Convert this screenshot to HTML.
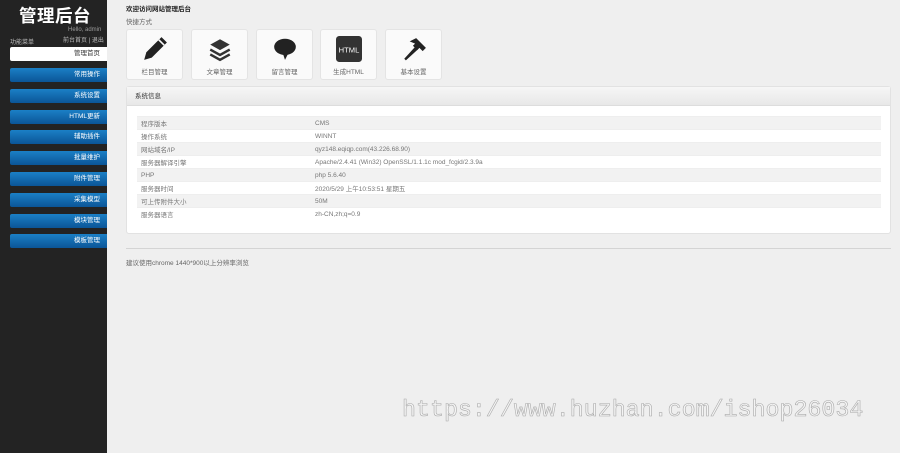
<!DOCTYPE html>
<html><head><meta charset="utf-8"><style>
*{margin:0;padding:0;box-sizing:border-box}
body{width:900px;height:453px;overflow:hidden;background:#efefef;font-family:"Liberation Sans","Noto Sans CJK SC",sans-serif;font-size:7px;color:#555;position:relative}
#side{position:absolute;left:0;top:0;width:107px;height:453px;background:#232323}
#side h1{position:absolute;left:19px;top:3px;font-size:17.5px;color:#fff;font-weight:bold;letter-spacing:0.5px;font-family:"Liberation Sans","Noto Sans CJK SC",sans-serif}
.t{position:absolute;font-size:6px;color:#bbb;white-space:nowrap}
.btn{position:absolute;left:10px;width:97px;height:14px;background:linear-gradient(#1b7fc6,#0b5597);color:#fff;text-align:right;padding-right:7px;line-height:14px;font-size:6.5px;border-radius:2px 0 0 2px}
.sc{position:absolute;top:29px;width:57px;height:51px;background:#fafafa;border:1px solid #e4e4e4;border-radius:3px;text-align:center}
.sc span{position:absolute;left:0;right:0;top:36px;font-size:6.5px;color:#666}
.sc svg{position:absolute;left:15px;top:6px}
#panel{position:absolute;left:126px;top:86px;width:765px;height:148px;background:#fff;border:1px solid #e2e2e2;border-radius:3px}
#ph{height:19px;background:linear-gradient(#f6f6f6,#e8e8e8);border-bottom:1px solid #ddd;padding-left:8px;line-height:19px;font-size:6.5px;color:#333}
table{position:absolute;left:10px;top:29px;width:744px;border-collapse:collapse}
td{height:13px;font-size:6.5px;color:#777;border-top:1px solid #eee;padding-left:4px}
tr:nth-child(odd) td{background:#f2f2f2}
td:first-child{width:174px}
</style></head><body>
<div id="side">
<h1>管理后台</h1>
<div class="t" style="left:68px;top:27px;color:#999">Hello, admin</div>
<div class="t" style="left:63px;top:35px">前台首页 | 退出</div>
<div class="t" style="left:10px;top:37px">功能菜单</div>
<div style="position:absolute;left:10px;top:47px;width:97px;height:14px;background:#fff;border-radius:2px 0 0 2px;text-align:right;padding-right:7px;line-height:14px;font-size:6.5px;color:#333">管理首页</div>
<div class="btn" style="top:68px">常用操作</div>
<div class="btn" style="top:89px">系统设置</div>
<div class="btn" style="top:110px">HTML更新</div>
<div class="btn" style="top:130px">辅助插件</div>
<div class="btn" style="top:151px">批量维护</div>
<div class="btn" style="top:172px">附件管理</div>
<div class="btn" style="top:193px">采集模型</div>
<div class="btn" style="top:214px">模块管理</div>
<div class="btn" style="top:234px">模板管理</div>
</div>
<div style="position:absolute;left:126px;top:3px;font-size:6.5px;color:#222;font-weight:bold">欢迎访问网站管理后台</div>
<div style="position:absolute;left:126px;top:16px;font-size:6.5px;color:#666">快捷方式</div>
<div class="sc" style="left:126px"><svg width="26" height="26" viewBox="0 0 24 24"><path d="M18 1l5 5-14 14-7 2 2-7z" fill="#222"/><path d="M15.5 3.5l5 5" stroke="#fafafa" stroke-width="1.5"/></svg><span>栏目管理</span></div>
<div class="sc" style="left:191px"><svg width="26" height="26" viewBox="0 0 24 24"><path d="M3 8l9-5 9 5-9 5z" fill="#333"/><path d="M3 12.5l9 5 9-5M3 17l9 5 9-5" stroke="#333" stroke-width="2.2" fill="none"/></svg><span>文章管理</span></div>
<div class="sc" style="left:256px"><svg width="26" height="26" viewBox="0 0 24 24"><ellipse cx="12" cy="10" rx="10" ry="7.5" fill="#222"/><path d="M10 16l2 6 3-6z" fill="#222"/></svg><span>留言管理</span></div>
<div class="sc" style="left:320px"><svg width="26" height="26" viewBox="0 0 24 24"><rect x="0" y="0" width="24" height="24" rx="3" fill="#333"/><text x="12" y="15" font-size="7" fill="#fff" text-anchor="middle" font-family="Liberation Sans">HTML</text></svg><span>生成HTML</span></div>
<div class="sc" style="left:385px"><svg width="26" height="26" viewBox="0 0 24 24"><path d="M3 21l10-11 2.5 2.5-11 10z" fill="#222"/><path d="M8 5l6-3 9 9-3 3-3-3-2 2-4-4 2-2z" fill="#222"/></svg><span>基本设置</span></div>
<div id="panel"><div id="ph">系统信息</div>
<table>
<tr><td>程序版本</td><td>CMS</td></tr>
<tr><td>操作系统</td><td>WINNT</td></tr>
<tr><td>网站域名/IP</td><td>qyz148.eqiqp.com(43.226.68.90)</td></tr>
<tr><td>服务器解译引擎</td><td>Apache/2.4.41 (Win32) OpenSSL/1.1.1c mod_fcgid/2.3.9a</td></tr>
<tr><td>PHP</td><td>php 5.6.40</td></tr>
<tr><td>服务器时间</td><td>2020/5/29 上午10:53:51 星期五</td></tr>
<tr><td>可上传附件大小</td><td>50M</td></tr>
<tr><td>服务器语言</td><td>zh-CN,zh;q=0.9</td></tr>
</table></div>
<div style="position:absolute;left:126px;top:248px;width:765px;border-top:1px solid #d4d4d4"></div>
<div style="position:absolute;left:126px;top:257px;font-size:6.5px;color:#666">建议使用chrome 1440*900以上分辨率浏览</div>
<div style="position:absolute;left:402px;top:397px;font-family:'Liberation Mono',monospace;font-size:23.3px;color:#f4f4f4;-webkit-text-stroke:0.6px #aaa;white-space:nowrap">https://www.huzhan.com/ishop26034</div>
</body></html>
